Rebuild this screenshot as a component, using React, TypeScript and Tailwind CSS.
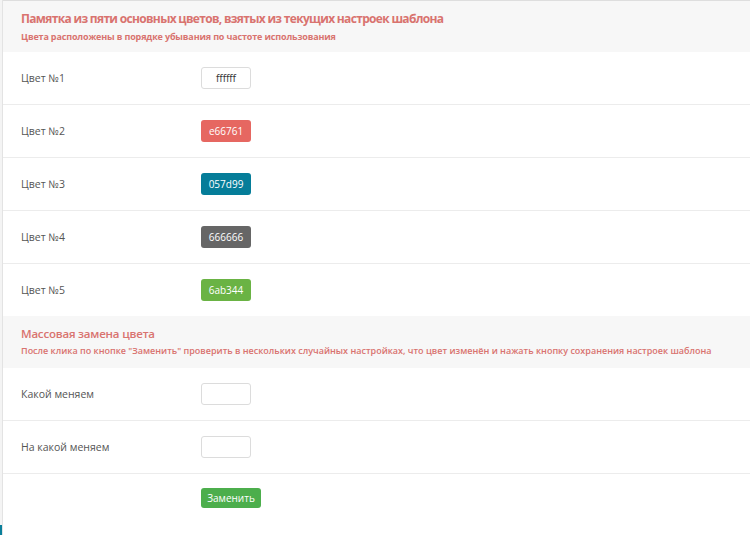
import React from 'react';

const colors = [
  { label: 'Цвет №1', hex: 'ffffff', bg: 'bg-white', text: 'text-[#333] border border-[#dcdcdc]' },
  { label: 'Цвет №2', hex: 'e66761', bg: 'bg-[#e66761]', text: 'text-white' },
  { label: 'Цвет №3', hex: '057d99', bg: 'bg-[#057d99]', text: 'text-white' },
  { label: 'Цвет №4', hex: '666666', bg: 'bg-[#666666]', text: 'text-white' },
  { label: 'Цвет №5', hex: '6ab344', bg: 'bg-[#6ab344]', text: 'text-white' },
];

function SectionHead(props: { title: string; note: string; big?: boolean }) {
  const { title, note, big } = props;
  return (
    <div className={`flex flex-col justify-center bg-[#f7f7f7] px-[18px] ${big ? 'h-[51px]' : 'h-[52px] pb-[2px]'}`}>
      <div
        className={`whitespace-nowrap leading-[18px] text-[#d9736f] ${
          big ? 'text-[12px] font-bold tracking-[-0.68px]' : 'text-[11.5px] font-semibold tracking-[-0.2px]'
        }`}
      >
        {title}
      </div>
      <div
        className={`whitespace-nowrap leading-[12px] text-[#d9736f] ${
          big ? 'mt-[3px] text-[9px] font-bold tracking-[-0.15px]' : 'mt-[2px] text-[9px] font-semibold tracking-[0px]'
        }`}
      >
        {note}
      </div>
    </div>
  );
}

function Row(props: { label: string; children: React.ReactNode; last?: boolean }) {
  const { label, children, last } = props;
  return (
    <div className={`flex items-center ${last ? 'h-[52px]' : 'h-[53px] border-b border-[#ececec]'}`}>
      <div className="w-[198px] pl-[18px] pt-[2px] text-[10.5px] text-[#555]">{label}</div>
      <div>{children}</div>
    </div>
  );
}

export default function App() {
  return (
    <div className="flex h-[535px] w-[750px] overflow-hidden bg-white font-['Open_Sans',sans-serif]">
      <div className="flex w-[3px] shrink-0 flex-col justify-end border-r border-[#e3e3e3] bg-[#f4f4f4]">
        <div className="h-[10px] bg-[#0a7f9a]" />
      </div>
      <div className="flex min-w-0 flex-1 flex-col border-t border-[#dedede]">
        <SectionHead
          big
          title="Памятка из пяти основных цветов, взятых из текущих настроек шаблона"
          note="Цвета расположены в порядке убывания по частоте использования"
        />
        {colors.map((c, i) => (
          <Row key={c.hex} label={c.label} last={i === colors.length - 1}>
            <div
              className={`flex h-[22px] w-[50px] items-center justify-center rounded-[3px] text-[10px] ${c.bg} ${c.text}`}
            >
              {c.hex}
            </div>
          </Row>
        ))}
        <SectionHead
          title="Массовая замена цвета"
          note={'После клика по кнопке "Заменить" проверить в нескольких случайных настройках, что цвет изменён и нажать кнопку сохранения настроек шаблона'}
        />
        <Row label="Какой меняем">
          <input className="block h-[22px] w-[50px] rounded-[3px] border border-[#dcdcdc] bg-white" />
        </Row>
        <Row label="На какой меняем">
          <input className="block h-[22px] w-[50px] rounded-[3px] border border-[#dcdcdc] bg-white" />
        </Row>
        <div className="flex pt-[14px] pl-[198px]">
          <button
            type="button"
            className="h-[20px] w-[60px] rounded-[3px] bg-[#4cae4c] text-[10px] text-white"
          >
            Заменить
          </button>
        </div>
      </div>
    </div>
  );
}
